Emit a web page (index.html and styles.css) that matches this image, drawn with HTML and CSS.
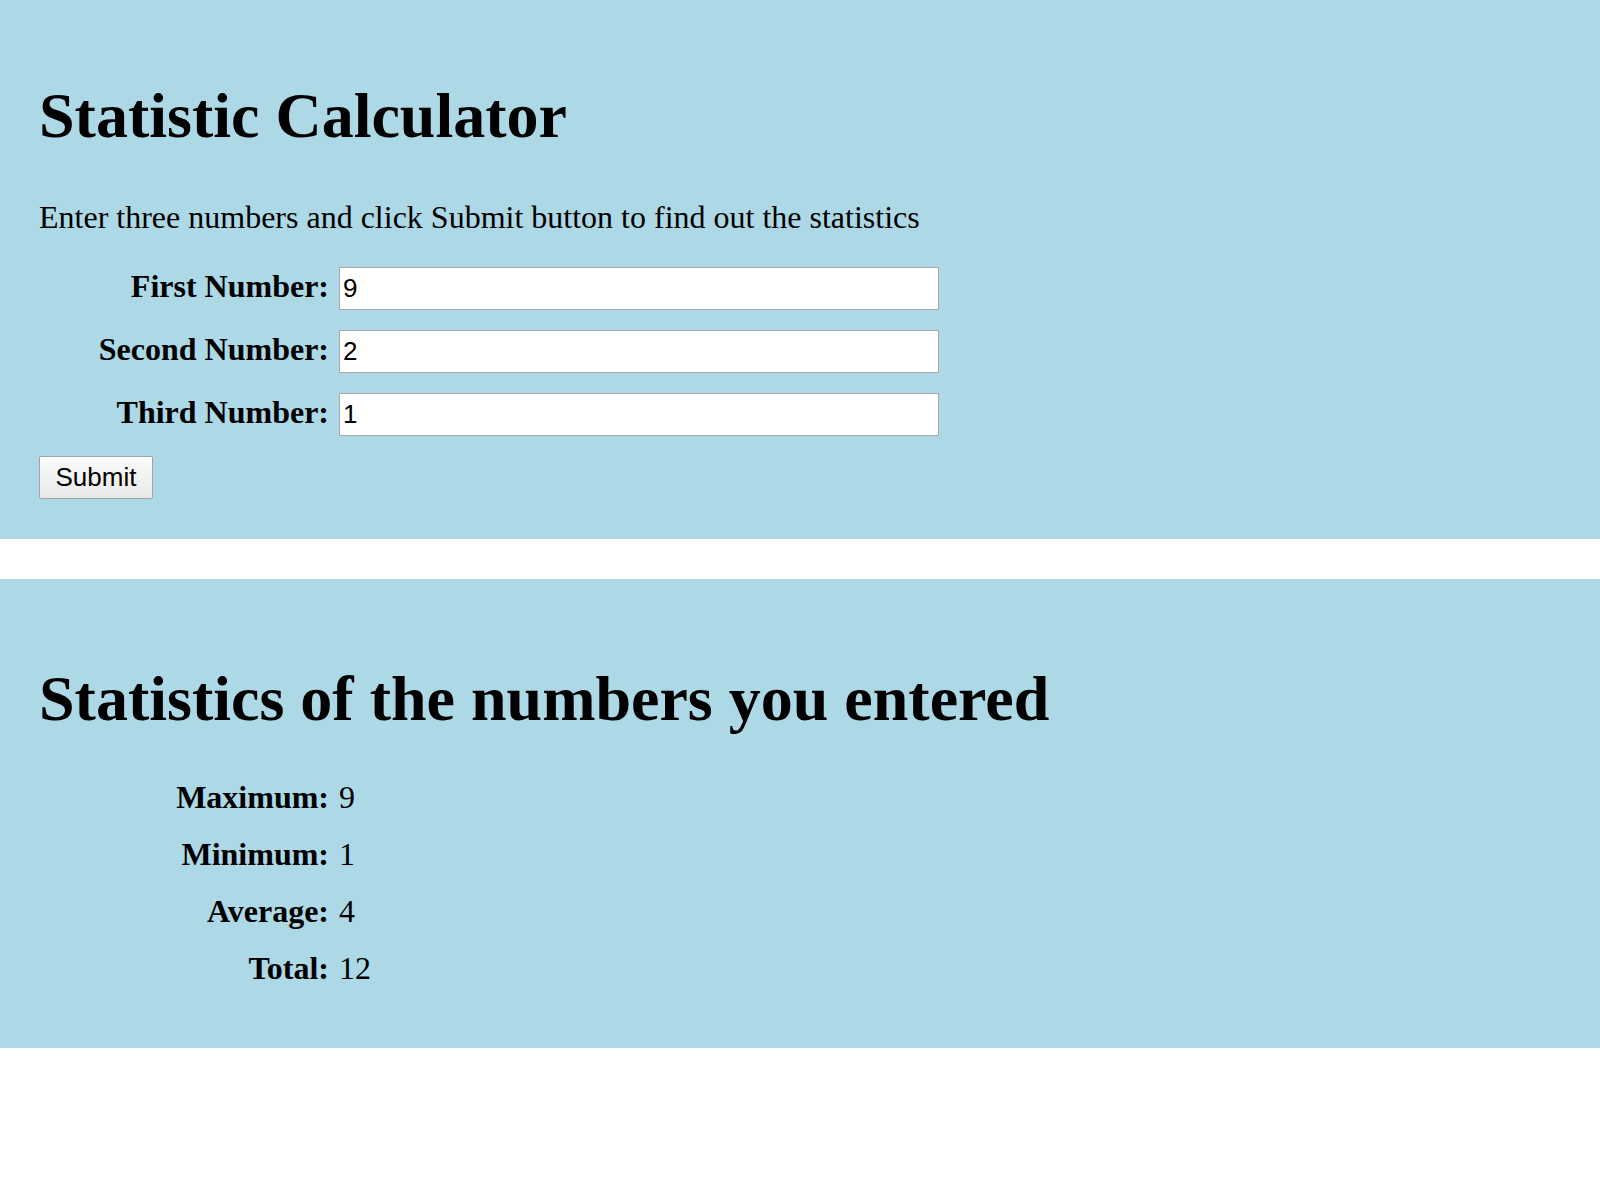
FILE: index.html
```html
<!DOCTYPE html>
<html lang="en">
<head>
<meta charset="utf-8">
<title>Statistic Calculator</title>
<link rel="stylesheet" href="styles.css">
</head>
<body>
<section class="panel panel-form">
  <h1 class="panel-title">Statistic Calculator</h1>
  <p class="intro">Enter three numbers and click Submit button to find out the statistics</p>
  <form class="calc-form">
    <div class="field">
      <label class="field-label" for="n1">First Number:</label>
      <input class="field-input" id="n1" type="text" value="9">
    </div>
    <div class="field">
      <label class="field-label" for="n2">Second Number:</label>
      <input class="field-input" id="n2" type="text" value="2">
    </div>
    <div class="field">
      <label class="field-label" for="n3">Third Number:</label>
      <input class="field-input" id="n3" type="text" value="1">
    </div>
    <button class="submit-btn" type="button">Submit</button>
  </form>
</section>
<section class="panel panel-results">
  <h1 class="panel-title">Statistics of the numbers you entered</h1>
  <div class="stats">
    <div class="stat"><span class="stat-label">Maximum:</span><span class="stat-value">9</span></div>
    <div class="stat"><span class="stat-label">Minimum:</span><span class="stat-value">1</span></div>
    <div class="stat"><span class="stat-label">Average:</span><span class="stat-value">4</span></div>
    <div class="stat"><span class="stat-label">Total:</span><span class="stat-value">12</span></div>
  </div>
</section>
</body>
</html>
```

FILE: styles.css
```css
html, body {
  margin: 0;
  padding: 0;
  background: #ffffff;
}

body {
  font-family: "Liberation Serif", "Times New Roman", serif;
  color: #000;
}

.panel {
  background: #add8e6;
  padding: 0 39px;
}

.panel-form {
  padding-top: 79px;
  padding-bottom: 40px;
  margin-bottom: 40px;
}

.panel-results {
  padding-top: 83px;
  padding-bottom: 61px;
}

.panel-title {
  font-size: 64px;
  font-weight: bold;
  margin: 0;
}

.panel-form .panel-title {
  margin-bottom: 46px;
}

.panel-results .panel-title {
  margin-bottom: 43px;
}

.intro {
  font-size: 32px;
  margin: 0 0 31px;
}

.calc-form {
  display: flex;
  flex-direction: column;
  align-items: flex-start;
}

.field {
  display: flex;
  align-items: baseline;
  gap: 10px;
  margin-bottom: 20px;
}

.field-label {
  width: 290px;
  text-align: right;
  font-size: 32px;
  font-weight: bold;
}

.field-input {
  box-sizing: border-box;
  width: 600px;
  height: 43px;
  margin: 0;
  padding: 0 3px;
  border: 1px solid #a9a9a9;
  background: #fff;
  font-family: "Liberation Sans", Arial, sans-serif;
  font-size: 26px;
  color: #000;
  outline: none;
}

.submit-btn {
  box-sizing: border-box;
  width: 114px;
  height: 43px;
  margin: 0;
  padding: 0;
  border: 1px solid #a3a3a3;
  border-radius: 2px;
  background: linear-gradient(#fbfbfb, #e9e9e9);
  font-family: "Liberation Sans", Arial, sans-serif;
  font-size: 26px;
  color: #000;
}

.stats {
  display: flex;
  flex-direction: column;
  gap: 20px;
}

.stat {
  display: flex;
  align-items: baseline;
  gap: 10px;
  font-size: 32px;
}

.stat-label {
  width: 290px;
  text-align: right;
  font-weight: bold;
}
```
